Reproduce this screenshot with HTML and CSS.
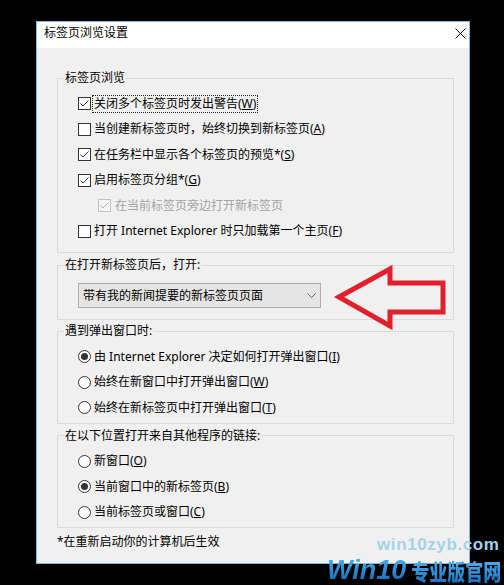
FILE: index.html
```html
<!DOCTYPE html>
<html lang="zh-CN">
<head>
<meta charset="utf-8">
<title>标签页浏览设置</title>
<link rel="stylesheet" href="styles.css">
</head>
<body>
<div class="dialog">
  <div class="titlebar">
    <span class="title">标签页浏览设置</span>
    <svg class="close" width="11" height="11" viewBox="0 0 11 11"><path d="M0.5 0.5 L10.5 10.5 M10.5 0.5 L0.5 10.5" stroke="#111" stroke-width="1" fill="none"/></svg>
  </div>
  <div class="content">
    <fieldset class="group g1">
      <legend>标签页浏览</legend>
      <div class="opt">
        <svg class="cb" viewBox="0 0 13 13"><rect x=".5" y=".5" width="12" height="12" fill="#fff" stroke="#333"/><path d="M2.5 6.5 L5 9 L10.5 3.5" fill="none" stroke="#333"/></svg>
        <span class="lbl focus">关闭多个标签页时发出警告(<u>W</u>)</span>
      </div>
      <div class="opt">
        <svg class="cb" viewBox="0 0 13 13"><rect x=".5" y=".5" width="12" height="12" fill="#fff" stroke="#333"/></svg>
        <span class="lbl">当创建新标签页时，始终切换到新标签页(<u>A</u>)</span>
      </div>
      <div class="opt">
        <svg class="cb" viewBox="0 0 13 13"><rect x=".5" y=".5" width="12" height="12" fill="#fff" stroke="#333"/><path d="M2.5 6.5 L5 9 L10.5 3.5" fill="none" stroke="#333"/></svg>
        <span class="lbl">在任务栏中显示各个标签页的预览*(<u>S</u>)</span>
      </div>
      <div class="opt">
        <svg class="cb" viewBox="0 0 13 13"><rect x=".5" y=".5" width="12" height="12" fill="#fff" stroke="#333"/><path d="M2.5 6.5 L5 9 L10.5 3.5" fill="none" stroke="#333"/></svg>
        <span class="lbl">启用标签页分组*(<u>G</u>)</span>
      </div>
      <div class="opt sub disabled">
        <svg class="cb" viewBox="0 0 13 13"><rect x=".5" y=".5" width="12" height="12" fill="#f4f4f4" stroke="#c2c2c2"/><path d="M2.5 6.5 L5 9 L10.5 3.5" fill="none" stroke="#b4b4b4"/></svg>
        <span class="lbl">在当前标签页旁边打开新标签页</span>
      </div>
      <div class="opt">
        <svg class="cb" viewBox="0 0 13 13"><rect x=".5" y=".5" width="12" height="12" fill="#fff" stroke="#333"/></svg>
        <span class="lbl">打开 Internet Explorer 时只加载第一个主页(<u>F</u>)</span>
      </div>
    </fieldset>

    <fieldset class="group g2">
      <legend>在打开新标签页后，打开:</legend>
      <div class="select">
        <span>带有我的新闻提要的新标签页页面</span>
        <svg class="chev" width="9" height="5" viewBox="0 0 9 5"><path d="M0.5 0.5 L4.5 4.5 L8.5 0.5" fill="none" stroke="#606060"/></svg>
      </div>
    </fieldset>

    <fieldset class="group g3">
      <legend>遇到弹出窗口时:</legend>
      <div class="opt"><span class="rb on"></span><span class="lbl">由 Internet Explorer 决定如何打开弹出窗口(<u>I</u>)</span></div>
      <div class="opt"><span class="rb"></span><span class="lbl">始终在新窗口中打开弹出窗口(<u>W</u>)</span></div>
      <div class="opt"><span class="rb"></span><span class="lbl">始终在新标签页中打开弹出窗口(<u>T</u>)</span></div>
    </fieldset>

    <fieldset class="group g4">
      <legend>在以下位置打开来自其他程序的链接:</legend>
      <div class="opt"><span class="rb"></span><span class="lbl">新窗口(<u>O</u>)</span></div>
      <div class="opt"><span class="rb on"></span><span class="lbl">当前窗口中的新标签页(<u>B</u>)</span></div>
      <div class="opt"><span class="rb"></span><span class="lbl">当前标签页或窗口(<u>C</u>)</span></div>
    </fieldset>

    <p class="note">*在重新启动你的计算机后生效</p>
  </div>
</div>

<svg class="arrow" width="124" height="74" viewBox="0 0 124 74">
  <polygon points="9,37 60,9 60,23 113,23 113,52 60,52 60,66" fill="none" stroke="#e0212b" stroke-width="5" stroke-linejoin="miter"/>
</svg>

<div class="wm-site">win10zyb.com</div>
<div class="wm-brand"><span class="wm-win">Win10</span><span class="wm-cn">专业版官网</span></div>
</body>
</html>
```

FILE: styles.css
```css
html, body {
  margin: 0;
}
body {
  position: relative;
  width: 504px;
  height: 585px;
  box-sizing: border-box;
  padding: 21px 0 0 36px;
  background: #000;
  overflow: hidden;
  font-family: "Noto Sans", "Noto Sans CJK SC", sans-serif;
  font-size: 12px;
  line-height: 16px;
  color: #000;
}

.dialog {
  width: 434px;
  height: 543px;
  box-sizing: border-box;
  border: 1px solid #86b9e2;
  background: #f0f0f0;
  display: flex;
  flex-direction: column;
}

.titlebar {
  height: 26px;
  flex: none;
  background: #fff;
  display: flex;
  align-items: flex-start;
  justify-content: space-between;
  padding: 0 3px 0 7px;
}
.title {
  margin-top: 3px;
}
.close {
  margin-top: 6px;
  display: block;
}

.content {
  flex: 1;
  padding: 22px 15px 0 20px;
  display: flex;
  flex-direction: column;
}

.group {
  margin: 0;
  min-width: 0;
  border: 1px solid #dadada;
  padding: 5px 0 2px 0;
}
.group legend {
  margin-left: 6px;
  padding: 0 1px;
  height: 16px;
  line-height: 16px;
}
.g1 { padding-bottom: 8px; }
.g2 { margin-top: 4px; padding: 10px 0 11px 0; }
.g3 { margin-top: 3px; }
.g4 { margin-top: 4px; }

.opt {
  display: flex;
  align-items: center;
  height: 25.5px;
  margin-left: 20px;
}
.opt.sub {
  margin-left: 40px;
}
.opt.sub .cb {
  margin-right: 4px;
}
.disabled {
  color: #a3a3a3;
}
.cb {
  width: 13px;
  height: 13px;
  flex: none;
  margin-right: 3px;
  display: block;
}
.lbl {
  white-space: nowrap;
}
.focus {
  display: inline-block;
  height: 16px;
  padding: 0 1px;
  margin-left: -1px;
  outline: 1px dotted #222;
}

.rb {
  width: 13px;
  height: 13px;
  box-sizing: border-box;
  flex: none;
  margin-right: 3px;
  border: 1px solid #333;
  border-radius: 50%;
  background: #fff;
  display: flex;
  align-items: center;
  justify-content: center;
}
.rb.on::after {
  content: "";
  width: 7px;
  height: 7px;
  border-radius: 50%;
  background: #333;
}

.select {
  margin-left: 20px;
  width: 243px;
  height: 25px;
  box-sizing: border-box;
  border: 1px solid #adadad;
  background: #e5e5e5;
  display: flex;
  align-items: center;
  justify-content: space-between;
  padding: 0 4px 0 4px;
}
.chev {
  display: block;
}

.note {
  margin: 6px 0 0 0;
}

.arrow {
  position: absolute;
  left: 330px;
  top: 260px;
}

.wm-site {
  position: absolute;
  left: 377px;
  top: 535px;
  font-family: "Liberation Sans", Arial, sans-serif;
  font-weight: bold;
  font-size: 17px;
  line-height: 20px;
  letter-spacing: 0.6px;
  color: #a4d3ea;
}
.wm-brand {
  position: absolute;
  left: 327px;
  top: 556px;
  display: flex;
  align-items: flex-end;
  white-space: nowrap;
}
.wm-win {
  font-family: "Liberation Sans", Arial, sans-serif;
  font-weight: bold;
  font-style: italic;
  font-size: 27px;
  line-height: 28px;
  background: linear-gradient(#4fb1ee, #0f66b8);
  -webkit-background-clip: text;
  background-clip: text;
  color: transparent;
}
.wm-cn {
  display: inline-block;
  margin-left: 5px;
  font-family: "Noto Sans CJK SC", sans-serif;
  font-weight: 900;
  font-size: 18px;
  line-height: 22px;
  transform: scaleY(1.2);
  transform-origin: bottom;
  background: linear-gradient(#5ab6ee, #1470bf);
  -webkit-background-clip: text;
  background-clip: text;
  color: transparent;
}
```
